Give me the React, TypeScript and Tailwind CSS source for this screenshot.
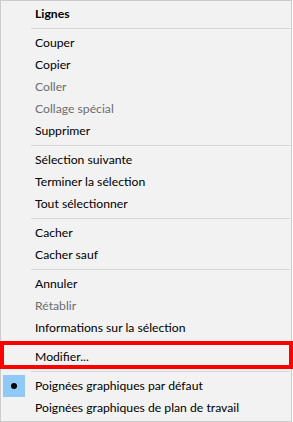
type Item = { label: string; disabled?: boolean; bold?: boolean; checked?: boolean } | "sep";

const items: Item[] = [
  { label: "Lignes", bold: true },
  "sep",
  { label: "Couper" },
  { label: "Copier" },
  { label: "Coller", disabled: true },
  { label: "Collage spécial", disabled: true },
  { label: "Supprimer" },
  "sep",
  { label: "Sélection suivante" },
  { label: "Terminer la sélection" },
  { label: "Tout sélectionner" },
  "sep",
  { label: "Cacher" },
  { label: "Cacher sauf" },
  "sep",
  { label: "Annuler" },
  { label: "Rétablir", disabled: true },
  { label: "Informations sur la sélection" },
  "sep",
  { label: "Modifier..." },
  "sep",
  { label: "Poignées graphiques par défaut", checked: true },
  { label: "Poignées graphiques de plan de travail" },
];

export default function App() {
  return (
    <div className="relative w-[293px] h-[422px] bg-white" style={{ fontFamily: "Lato, 'Noto Sans', sans-serif" }}>
      <div className="w-[292px] h-[422px] bg-[#f2f2f2] border border-[#cccccc] pt-[2px] pb-[2px] text-[12.2px]">
        {items.map((item, i) =>
          item === "sep" ? (
            <div key={i} className="h-[7px] flex items-center pl-[30px] pr-[1px]">
              <div className="h-px w-full bg-[#d7d7d7]" />
            </div>
          ) : (
            <div key={i} className="h-[22px] flex items-center">
              <div className="w-[34px] h-[22px] flex items-center pl-[2px]">
                {item.checked && (
                  <div className="w-[22px] h-[22px] bg-[#90c8f6] flex items-center justify-center">
                    <div className="w-[6px] h-[6px] rounded-full bg-[#000]" />
                  </div>
                )}
              </div>
              <span
                className={
                  (item.bold ? "font-bold " : "") +
                  (item.disabled ? "text-[#6d6d6d]" : "text-black")
                }
              >
                {item.label}
              </span>
            </div>
          )
        )}
      </div>
      <div className="absolute left-0 top-[341px] w-[293px] h-[28px] border-4 border-[#ff0000]" />
    </div>
  );
}
